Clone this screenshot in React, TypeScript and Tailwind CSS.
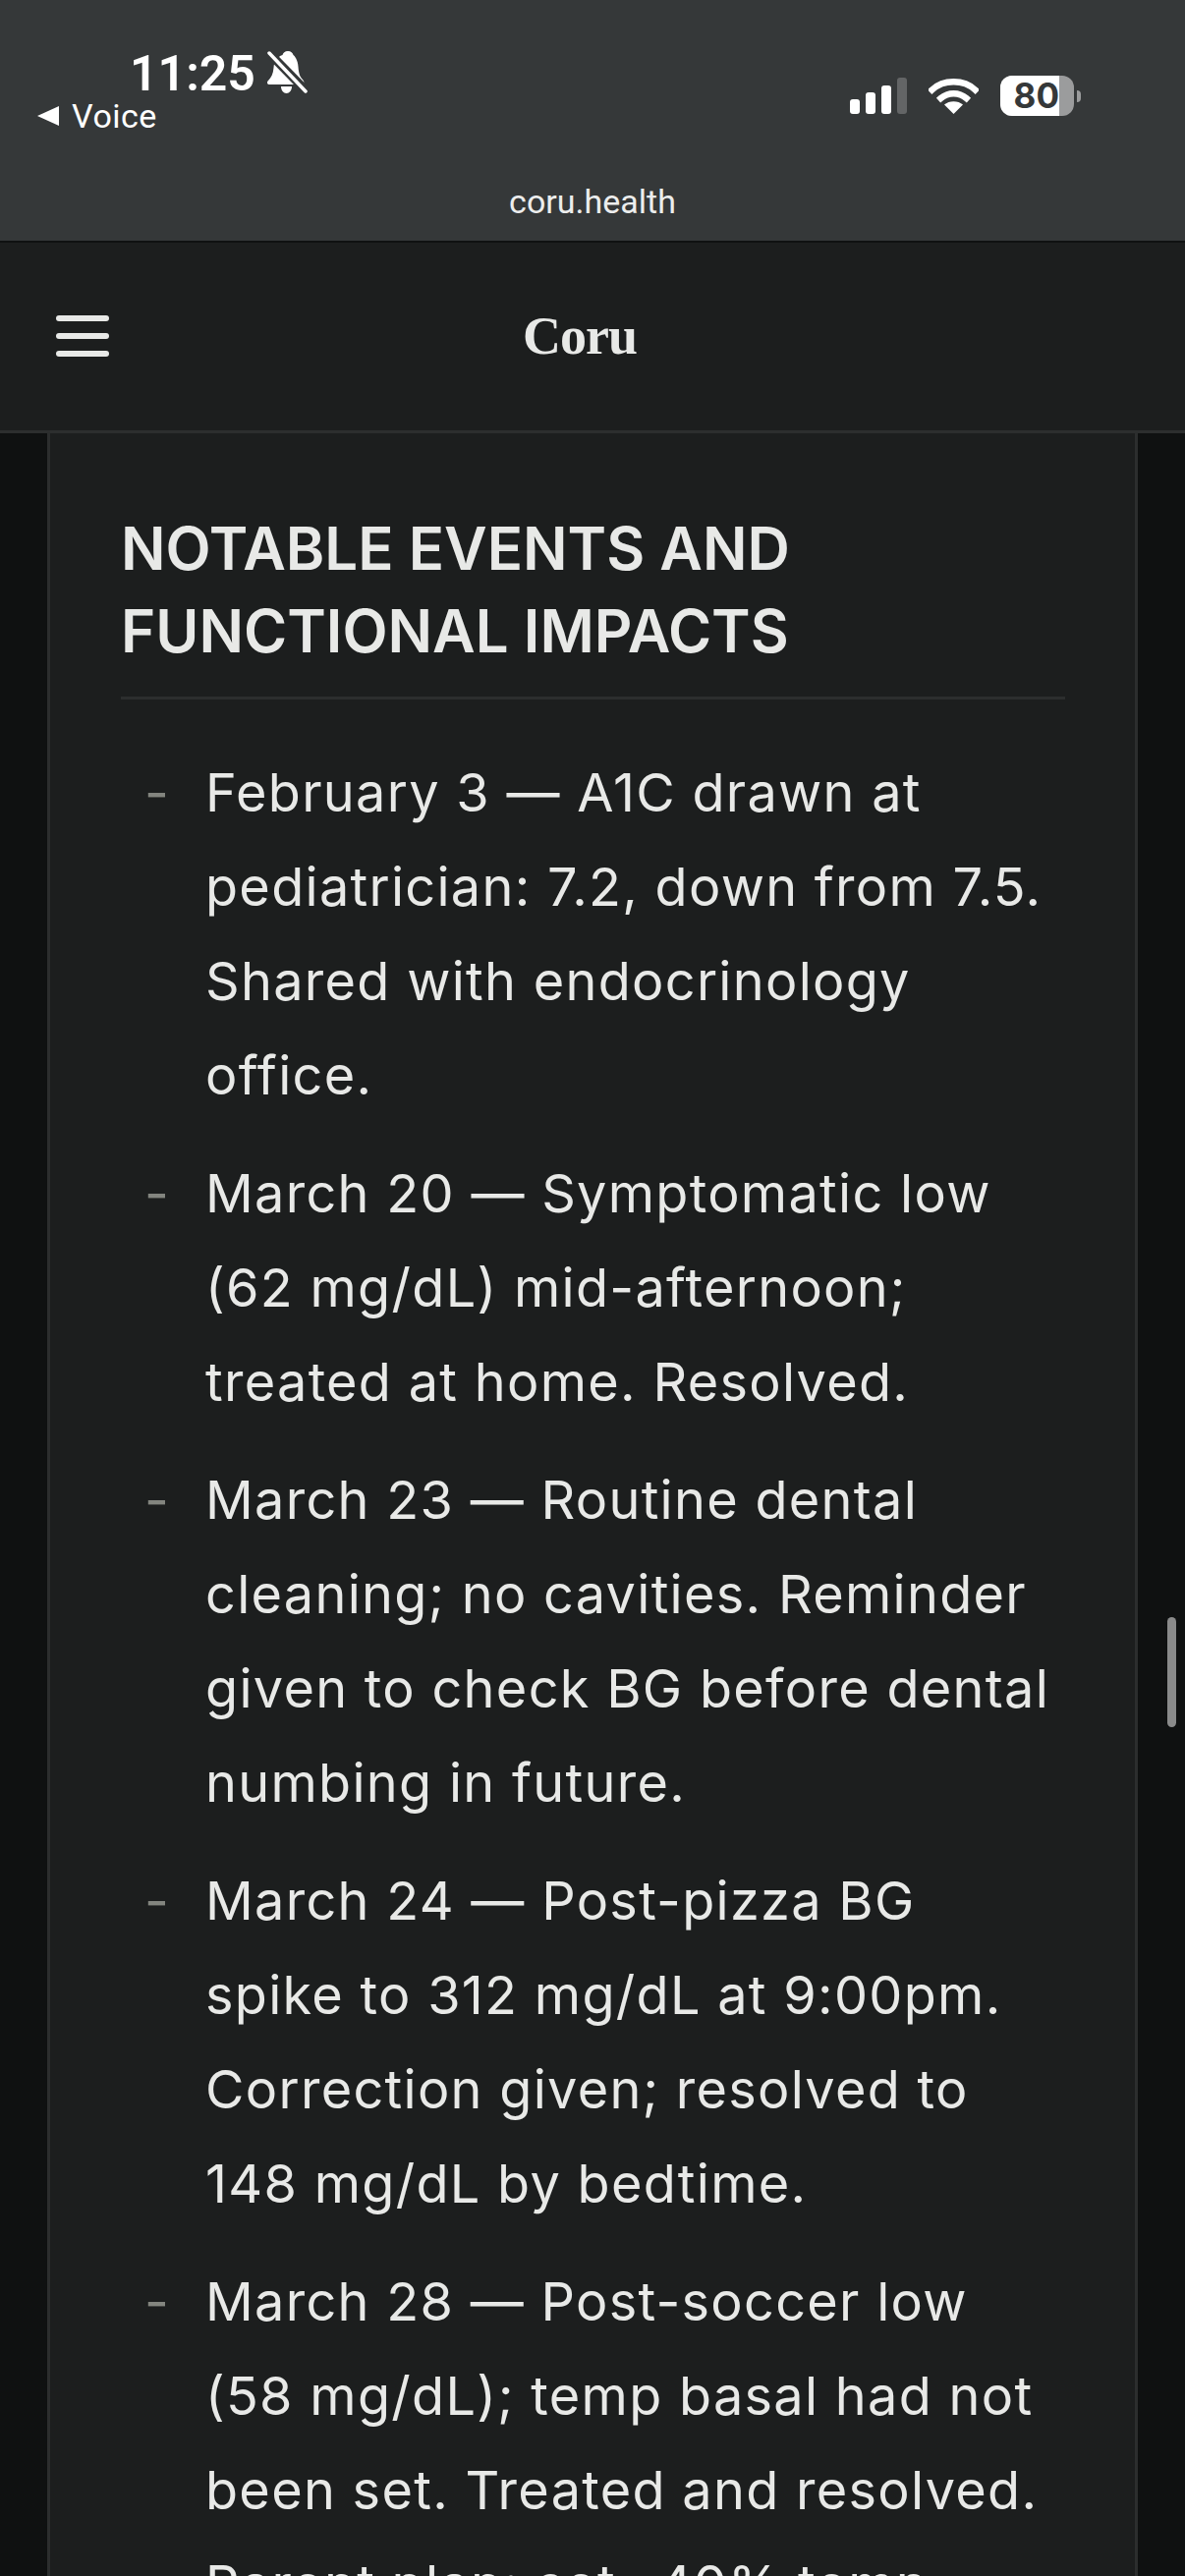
const items: string[][] = [
  ["February 3 — A1C drawn at", "pediatrician: 7.2, down from 7.5.", "Shared with endocrinology", "office."],
  ["March 20 — Symptomatic low", "(62 mg/dL) mid-afternoon;", "treated at home. Resolved."],
  ["March 23 — Routine dental", "cleaning; no cavities. Reminder", "given to check BG before dental", "numbing in future."],
  ["March 24 — Post-pizza BG", "spike to 312 mg/dL at 9:00pm.", "Correction given; resolved to", "148 mg/dL by bedtime."],
  ["March 28 — Post-soccer low", "(58 mg/dL); temp basal had not", "been set. Treated and resolved.", "Parent plan: set -40% temp"],
];

function Bell() {
  return (
    <svg width="41" height="43" viewBox="0 0 41 43" className="ml-[12px] -mt-[3px] shrink-0">
      <path d="M21 0c-3 0-5 2-5.500 4C10 6 7 10 6.500 17 6 23 4 27 1 30c-2 2-1 4 2 4h32c3 0 3-3 1-5-3-3-4-7-4.500-13C31 9 28 5 26.500 4 26 2 24 0 21 0z" fill="#fff" />
      <path d="M14 36h11c0 4-2.500 7-5.500 7S14 40 14 36z" fill="#fff" />
      <path d="M-1 -1 41 42" stroke="#353839" strokeWidth="9" />
      <path d="M2 2 39 41" stroke="#fff" strokeWidth="3.500" strokeLinecap="round" />
    </svg>
  );
}

function Signal() {
  return (
    <svg width="58" height="37" viewBox="0 0 58 37">
      <rect x="0" y="22" width="10" height="15" rx="3" fill="#fff" />
      <rect x="16" y="15" width="10" height="22" rx="3" fill="#fff" />
      <rect x="32" y="8" width="10" height="29" rx="3" fill="#fff" />
      <rect x="48" y="0" width="10" height="37" rx="3" fill="#636566" />
    </svg>
  );
}

function Wifi() {
  return (
    <svg width="51" height="37" viewBox="0 0 51 37">
      <path d="M3.500 12.500C15 1.500 36 1.500 47.500 12.500" stroke="#fff" strokeWidth="6.500" fill="none" strokeLinecap="square" />
      <path d="M12.500 21C20 14.500 31 14.500 38.500 21" stroke="#fff" strokeWidth="6.500" fill="none" strokeLinecap="square" />
      <path d="M25.500 37 16 27.500C21 23 30 23 35 27.500z" fill="#fff" />
    </svg>
  );
}

function Battery() {
  return (
    <div className="flex items-center">
      <div className="w-[75px] h-[41px] rounded-[12px] bg-[#9b9c9d] overflow-hidden">
        <div className="h-full w-[60px] bg-white flex items-center justify-end">
          <span className="text-[35px] leading-none font-bold text-[#353839] font-['Inter',sans-serif]">80</span>
        </div>
      </div>
      <div className="w-[4px] h-[12px] ml-[3px] rounded-r-full bg-[#9b9c9d]" />
    </div>
  );
}

export default function App() {
  return (
    <div className="w-[1206px] h-[2622px] overflow-hidden bg-[#0f1111] font-['Inter',sans-serif] flex flex-col">
      <header className="h-[247px] shrink-0 bg-[#353839] border-b-2 border-[#0f1111] flex flex-col">
        <div className="flex justify-between pt-[52px] h-[190px]">
          <div className="pl-[38px] flex flex-col">
            <div className="flex items-center pl-[94px] h-[46px]">
              <span className="text-[50px] leading-none font-semibold text-white font-['Roboto',sans-serif]">11:25</span>
              <Bell />
            </div>
            <div className="flex items-center mt-[5px] h-[30px]">
              <span className="w-0 h-0 border-y-[10px] border-y-transparent border-r-[22px] border-r-white" />
              <span className="ml-[13px] text-[34px] leading-none tracking-[0.5px] text-white font-['Roboto',sans-serif]">Voice</span>
            </div>
          </div>
          <div className="flex items-center h-[41px] pr-[106px] mt-[25px]">
            <Signal />
            <div className="ml-[22px]"><Wifi /></div>
            <div className="ml-[22px]"><Battery /></div>
          </div>
        </div>
        <div className="text-center text-[34px] leading-[40px] text-[#eceded] font-['Roboto',sans-serif] -mt-[5px]">coru.health</div>
      </header>

      <nav className="h-[194px] shrink-0 bg-[#1c1e1e] border-b-[3px] border-[#2c2e2e] flex items-center">
        <div className="ml-[57px] w-[54px] flex flex-col gap-[12px] -mt-[2px]">
          <div className="h-[6px] rounded-full bg-[#e8e9e7]" />
          <div className="h-[6px] rounded-full bg-[#e8e9e7]" />
          <div className="h-[6px] rounded-full bg-[#e8e9e7]" />
        </div>
        <div className="ml-[421px] text-[54px] leading-none tracking-[-1px] font-bold text-[#e8e9e7] font-['Liberation_Serif',serif] -mt-[2px]">Coru</div>
      </nav>

      <div className="flex-1 flex relative min-h-0">
        <main className="ml-[48px] w-[1110px] border-x-[3px] border-[#2c2e2e] bg-[#1c1e1e] pt-[75px] pl-[72px] pr-[71px]">
          <h2 className="text-[60px] leading-[84px] font-semibold text-[#e8e9e7] border-b-[3px] border-[#2c2e2e] pb-[25px]">
            NOTABLE EVENTS AND<br />FUNCTIONAL IMPACTS
          </h2>
          <ul className="mt-[47px] flex flex-col gap-[24px]">
            {items.map((lines, i) => (
              <li key={i} className="flex">
                <span className="w-[86px] pl-[24px] shrink-0 text-[54px] leading-[96px] text-[#83857f]">-</span>
                <div className="text-[54px] leading-[96px] tracking-[1.3px] text-[#e8e9e7] whitespace-nowrap">
                  {lines.map((l, j) => (
                    <div key={j}>{l}</div>
                  ))}
                </div>
              </li>
            ))}
          </ul>
        </main>
        <div className="absolute right-[9px] top-[1205px] w-[9px] h-[112px] rounded-full bg-[#8a8b8b]" />
      </div>
    </div>
  );
}
